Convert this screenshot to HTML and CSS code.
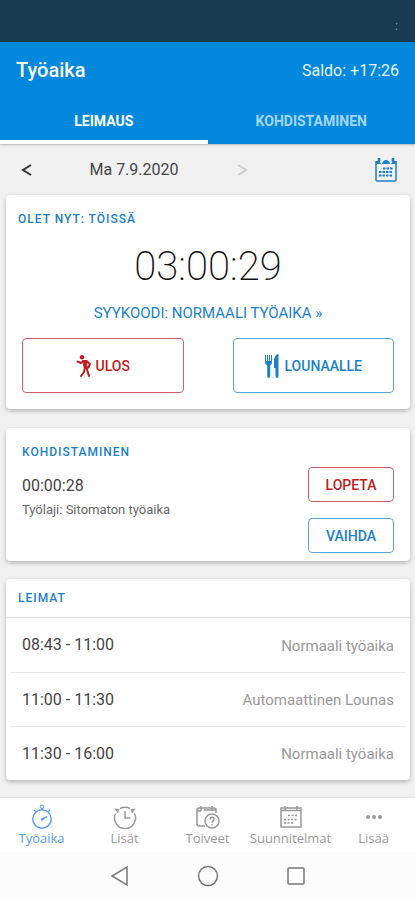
FILE: index.html
```html
<!DOCTYPE html>
<html lang="fi">
<head>
<meta charset="utf-8">
<meta name="viewport" content="width=device-width, initial-scale=1">
<title>Työaika</title>
<link rel="stylesheet" href="styles.css">
</head>
<body>
<div class="app">
  <div class="status-bar"><span>:</span></div>

  <header class="app-bar">
    <div class="title-row">
      <h1>Työaika</h1>
      <span class="balance">Saldo: +17:26</span>
    </div>
    <nav class="tabs">
      <button class="tab tab-active" type="button">LEIMAUS</button>
      <button class="tab" type="button">KOHDISTAMINEN</button>
    </nav>
  </header>

  <main class="content">
    <div class="date-row">
      <button class="icon-button" type="button" aria-label="Edellinen päivä">
        <svg width="12" height="14" viewBox="0 0 12 14" fill="none" stroke="#333" stroke-width="2"><path d="M11 2 3 7l8 5"/></svg>
      </button>
      <span class="date">Ma 7.9.2020</span>
      <button class="icon-button" type="button" aria-label="Seuraava päivä">
        <svg width="12" height="14" viewBox="0 0 12 14" fill="none" stroke="#ccc" stroke-width="2"><path d="m2 2 8 5-8 5"/></svg>
      </button>
      <button class="icon-button calendar-button" type="button" aria-label="Kalenteri">
        <svg width="24" height="26" viewBox="0 0 24 26" fill="none" stroke="#1b80c8">
          <path d="M2 4v19q0 1 1 1h18q1 0 1-1V4" stroke-width="1.500"/>
          <path d="M2 4h3l2 3h1q1-4 4-4t4 4h1l2-3h3v3H2z" fill="#1b80c8" stroke="none"/>
          <path d="M5 1v4M19 1v4" stroke-width="2.500"/>
          <path d="M9 11.500h10M5 15h14M5 18.500h14" stroke-width="2" stroke-dasharray="2.500 1"/>
        </svg>
      </button>
    </div>

    <section class="card">
      <h2 class="card-title">OLET NYT: TÖISSÄ</h2>
      <div class="clock">03:00:29</div>
      <a class="reason" href="#syykoodi">SYYKOODI: NORMAALI TYÖAIKA »</a>
      <div class="actions">
        <button class="button button-large button-red" type="button">
          <svg width="16" height="22" viewBox="0 0 16 22" fill="none" stroke="currentColor" stroke-width="2" stroke-linejoin="round" stroke-linecap="round">
            <circle cx="6" cy="2.200" r="2.200" fill="currentColor" stroke="none"/>
            <path d="M7 5.500h3.500l.5 7H8.500z" fill="currentColor" stroke-width="1"/>
            <path d="M7.500 6 5 8 1.500 6.500M10.500 6l3.500 3-1.500 3.500M9 12l-1 5-3 4M10.300 12l1.200 4 1.500 5"/>
          </svg>
          ULOS
        </button>
        <button class="button button-large button-blue" type="button">
          <svg width="16" height="24" viewBox="0 0 16 24" fill="currentColor">
            <path d="M1 1v7q0 3 2.200 3.500V22q0 2 1.500 2t1.500-2V11.500Q8 11 8 8V1H7v6H6V1H5v6H4V1H3v6H2V1z"/>
            <path d="M14.500 0Q10 1 10 7v7h1.500v8q0 2 1.500 2t1.500-2z"/>
          </svg>
          LOUNAALLE
        </button>
      </div>
    </section>

    <section class="card allocation">
      <div>
        <h2 class="card-title">KOHDISTAMINEN</h2>
        <div class="elapsed">00:00:28</div>
        <div class="work-type">Työlaji: Sitomaton työaika</div>
      </div>
      <div class="side-actions">
        <button class="button button-red" type="button">LOPETA</button>
        <button class="button button-blue" type="button">VAIHDA</button>
      </div>
    </section>

    <section class="card stamps">
      <h2 class="card-title">LEIMAT</h2>
      <table>
        <tbody>
          <tr><th scope="row">08:43 - 11:00</th><td>Normaali työaika</td></tr>
          <tr><th scope="row">11:00 - 11:30</th><td>Automaattinen Lounas</td></tr>
          <tr><th scope="row">11:30 - 16:00</th><td>Normaali työaika</td></tr>
        </tbody>
      </table>
    </section>
  </main>

  <nav class="bottom-nav">
    <a class="nav-item nav-active" href="#tyoaika">
      <svg width="24" height="26" viewBox="0 0 24 26" fill="none" stroke="currentColor" stroke-width="1.500">
        <circle cx="12" cy="15" r="9.200"/><circle cx="12" cy="2.800" r="1.800" stroke-width="1"/>
        <path d="M12 4.500V6M4 6l2 2M20 6l-2 2M12 15.500l5-3"/><path d="m11 16 2-1" stroke-width="2"/>
      </svg>
      Työaika
    </a>
    <a class="nav-item" href="#lisat">
      <svg width="24" height="26" viewBox="0 0 24 26" fill="none" stroke="currentColor" stroke-width="1.500">
        <path d="M2.500 9.500A10.500 10.500 0 1 0 21.500 9.500M7 4.500Q12 2 17 4.500M12 7v7h5.500"/>
        <path d="M1.500 4.500 6.500 5 5 9.500zM22.500 4.500 17.500 5 19 9.500z" fill="currentColor" stroke="none"/>
      </svg>
      Lisät
    </a>
    <a class="nav-item" href="#toiveet">
      <svg width="24" height="26" viewBox="0 0 24 26" fill="none" stroke="currentColor" stroke-width="1.500">
        <path d="M9 22H3q-2 0-2-2V6q0-2 2-2h15q2 0 2 2v3M1 7h4M8 6h12M5 2v5M16 2v5"/>
        <circle cx="16" cy="17" r="7"/>
        <path d="M14 15.500q0-2.200 2-2.200t2 2q0 1-1 1.500t-1 1.700M16 20v1.300"/>
      </svg>
      Toiveet
    </a>
    <a class="nav-item" href="#suunnitelmat">
      <svg width="24" height="26" viewBox="0 0 24 26" fill="none" stroke="currentColor" stroke-width="1.500">
        <path d="M2 4h20v19H2zM2 6.500h20M6 2v5M18 2v5"/>
        <path d="M9 11.500h10M5 15.500h14M5 19h10" stroke-dasharray="2 1.500"/>
      </svg>
      Suunnitelmat
    </a>
    <a class="nav-item" href="#lisaa">
      <svg width="24" height="26" viewBox="0 0 24 26" fill="currentColor">
        <circle cx="6" cy="13" r="2"/><circle cx="12" cy="13" r="2"/><circle cx="18" cy="13" r="2"/>
      </svg>
      Lisää
    </a>
  </nav>

  <div class="system-nav">
    <button type="button" aria-label="Takaisin"><svg width="22" height="22" viewBox="0 0 22 22"><path d="M18 2v18L3 11z"/></svg></button>
    <button type="button" aria-label="Koti"><svg width="22" height="22" viewBox="0 0 22 22"><circle cx="11" cy="11" r="9.500"/></svg></button>
    <button type="button" aria-label="Viimeisimmät"><svg width="22" height="22" viewBox="0 0 22 22"><rect x="3" y="3" width="16" height="16" rx="1"/></svg></button>
  </div>
</div>
</body>
</html>
```
FILE: styles.css
```css
* {
  box-sizing: border-box;
}

body {
  margin: 0;
  font-family: Roboto, sans-serif;
  color: #444;
  background: #f1f1f1;
}

button {
  font: inherit;
  border: 0;
  background: none;
  padding: 0;
}

a {
  text-decoration: none;
}

svg {
  display: block;
  flex: none;
}

.app {
  display: flex;
  flex-direction: column;
  min-height: 100vh;
}

.status-bar {
  height: 42px;
  padding: 18px 17px 0;
  background: #193b50;
  color: #8496a2;
  font-size: 12px;
  line-height: 16px;
  text-align: right;
}

.app-bar {
  background: #0288dc;
  color: #fff;
  box-shadow: 0 1px 2px rgba(0, 0, 0, 0.25);
}

.title-row {
  display: flex;
  align-items: center;
  justify-content: space-between;
  height: 56px;
  padding: 0 16px;
}

h1 {
  margin: 0;
  font-size: 20px;
  font-weight: 500;
}

.balance {
  font-size: 16px;
  color: #e6f4fd;
}

.tabs {
  display: grid;
  grid-template-columns: 1fr 1fr;
}

.tab {
  height: 46px;
  border-bottom: 4px solid transparent;
  padding-top: 4px;
  font-size: 14px;
  font-weight: 700;
  color: #a6d6f5;
}

.tab-active {
  border-color: #fff;
  color: #fff;
}

.content {
  flex: 1;
  padding: 0 5px 17px 6px;
}

.date-row {
  display: flex;
  align-items: center;
  height: 51px;
  padding: 0 12px 0 14px;
}

.icon-button {
  display: flex;
}

.date {
  width: 204px;
  text-align: center;
  font-size: 16px;
}

.calendar-button {
  margin-left: auto;
}

.card {
  margin-bottom: 19px;
  padding: 16px;
  border-radius: 4px;
  background: #fff;
  box-shadow: 0 2px 4px rgba(0, 0, 0, 0.25);
}

.card:last-child {
  margin-bottom: 0;
}

.card-title {
  margin: 0;
  font-size: 12px;
  line-height: 16px;
  font-weight: 500;
  letter-spacing: 1px;
  color: #1b80c8;
}

.card > .card-title {
  margin-left: -4px;
}

.clock {
  margin-top: 16px;
  font-size: 40px;
  line-height: 48px;
  font-weight: 200;
  text-align: center;
  color: #111;
}

.reason {
  display: block;
  margin: 12px 0 15px;
  font-size: 15px;
  line-height: 20px;
  text-align: center;
  color: #1b80c8;
}

.actions {
  display: grid;
  grid-template-columns: 1fr 1fr;
  gap: 49px;
}

.button {
  display: flex;
  align-items: center;
  justify-content: center;
  gap: 4px;
  width: 86px;
  height: 35px;
  border: 1px solid;
  border-radius: 4px;
  font-size: 14px;
  font-weight: 500;
}

.button-large {
  width: auto;
  height: 55px;
}

.button-red {
  color: #c01c22;
  border-color: #cf6065;
}

.button-blue {
  color: #1b80c8;
  border-color: #5ba4d8;
}

.allocation {
  display: flex;
  justify-content: space-between;
  padding-bottom: 8px;
}

.elapsed {
  margin-top: 16px;
  font-size: 16px;
  line-height: 20px;
}

.work-type {
  margin-top: 6px;
  font-size: 13px;
  line-height: 16px;
  color: #666;
}

.side-actions {
  display: grid;
  gap: 16px;
  padding-top: 23px;
}

.card:nth-of-type(2) {
  margin-bottom: 18px;
}

.stamps > .card-title {
  margin: 0;
  padding: 11px 12px;
  border-bottom: 1px solid #e2e2e2;
}

.stamps {
  padding: 0;
}

table {
  width: calc(100% - 8px);
  margin: 0 4px;
  border-collapse: collapse;
}

th,
td {
  height: 54px;
  padding: 0 12px;
  font-weight: 400;
  border-bottom: 1px solid #e8e8e8;
}

tr:last-child > * {
  border-bottom: 0;
}

th {
  text-align: left;
  font-size: 16px;
}

td {
  padding-top: 2px;
  text-align: right;
  font-size: 15px;
  color: #999;
}

.bottom-nav {
  display: grid;
  grid-template-columns: repeat(5, 1fr);
  height: 54px;
  padding-top: 6px;
  background: #fff;
  box-shadow: 0 -1px 2px rgba(0, 0, 0, 0.08);
}

.nav-item {
  display: flex;
  flex-direction: column;
  align-items: center;
  font-family: "Open Sans", sans-serif;
  font-size: 13px;
  line-height: 16px;
  color: #999;
}

.nav-active {
  color: #5b9ff0;
}

.system-nav {
  display: flex;
  align-items: center;
  justify-content: center;
  gap: 66px;
  height: 48px;
  background: #fcfcfc;
}

.system-nav svg {
  fill: none;
  stroke: #777;
  stroke-width: 1.5;
}
```
